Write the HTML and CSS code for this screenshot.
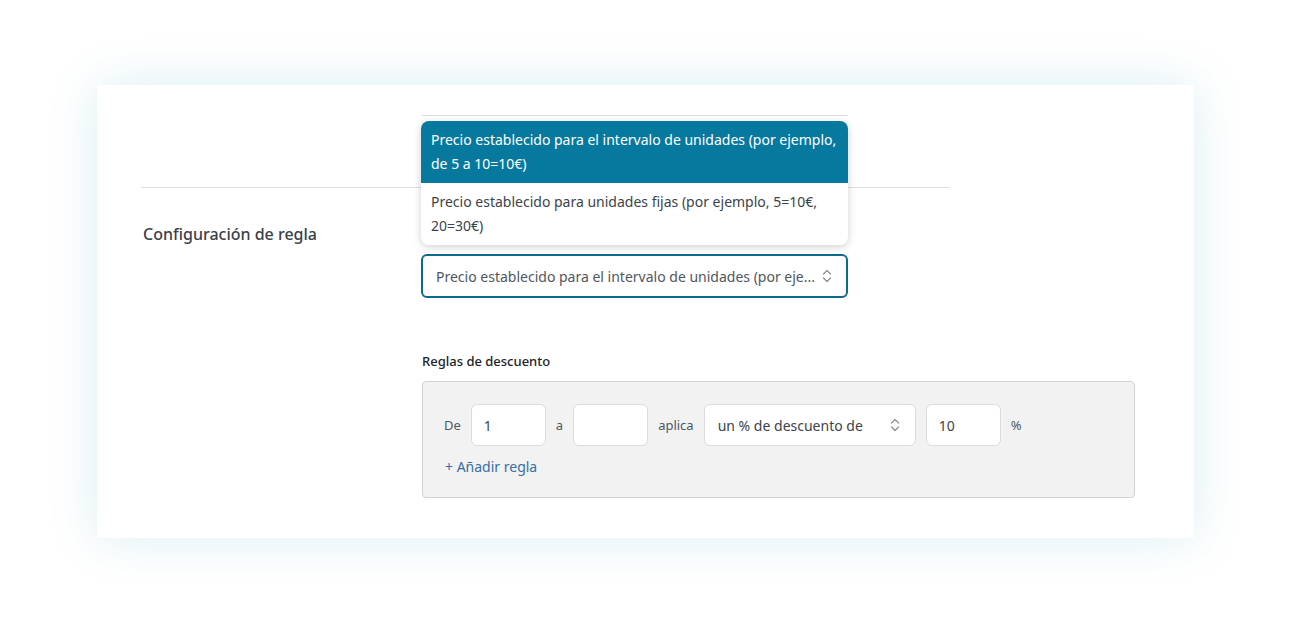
FILE: index.html
```html
<!DOCTYPE html>
<html lang="es">
<head>
<meta charset="utf-8">
<title>Configuración de regla</title>
<link rel="stylesheet" href="styles.css">
</head>
<body>
<div class="page">
<div class="card">
  <div class="row top-row">
    <div class="label-col"></div>
    <div class="field-col"><div class="prev-field"></div></div>
  </div>
  <div class="row main-row">
    <div class="label-col"><div class="section-label">Configuración de regla</div></div>
    <div class="field-col">
      <div class="select-wrap">
        <ul class="menu">
          <li class="menu-item selected">Precio establecido para el intervalo de unidades (por ejemplo, de 5 a 10=10€)</li>
          <li class="menu-item">Precio establecido para unidades fijas (por ejemplo, 5=10€, 20=30€)</li>
        </ul>
        <div class="select focused">
          <span class="select-text">Precio establecido para el intervalo de unidades (por eje...</span>
          <svg class="chev" width="10" height="14" viewBox="0 0 10 14"><path d="M1.5 5 L5 1.5 L8.5 5 M1.5 9 L5 12.5 L8.5 9" fill="none" stroke="#8c8f94" stroke-width="1.3" stroke-linecap="round" stroke-linejoin="round"/></svg>
        </div>
      </div>
      <div class="rules-title">Reglas de descuento</div>
      <div class="rules-box">
        <div class="rule-line">
          <span class="word">De</span>
          <div class="input">1</div>
          <span class="word">a</span>
          <div class="input"></div>
          <span class="word">aplica</span>
          <div class="input select-small">
            <span>un % de descuento de</span>
            <svg class="chev" width="10" height="14" viewBox="0 0 10 14"><path d="M1.5 5 L5 1.5 L8.5 5 M1.5 9 L5 12.5 L8.5 9" fill="none" stroke="#8c8f94" stroke-width="1.3" stroke-linecap="round" stroke-linejoin="round"/></svg>
          </div>
          <div class="input">10</div>
          <span class="word">%</span>
        </div>
        <a class="add-rule" href="#">+ Añadir regla</a>
      </div>
    </div>
  </div>
</div>
</div>
</body>
</html>
```
FILE: styles.css
```css
* { box-sizing: border-box; }
html, body { background: #ffffff; }
body {
  margin: 0;
  font-family: "Noto Sans", "Open Sans", sans-serif;
  color: #3c434a;
}
.page {
  min-height: 629px;
  padding: 85px 0 0 97px;
}
.card {
  width: 1097px;
  height: 453px;
  background: #ffffff;
  padding: 30px 244px 0 44px;
  box-shadow: 0 0 50px rgba(0, 140, 170, 0.15);
  border-radius: 2px;
}
.row {
  display: grid;
  grid-template-columns: 280px 1fr;
}
.top-row { height: 72px; }
.prev-field {
  width: 426px;
  margin-left: 1px;
  border-top: 1px solid #dcdcde;
}
.main-row {
  border-top: 1px solid #e0e0e3;
  width: 809px;
}
.section-label {
  padding: 34px 0 0 2px;
  font-size: 16px;
  line-height: 24px;
  font-weight: 500;
  color: #3a4148;
}
.field-col { position: relative; }
.select-wrap {
  position: relative;
  margin-top: 66px;
  width: 427px;
}
.menu {
  position: absolute;
  left: 0;
  right: 0;
  bottom: calc(100% + 9px);
  margin: 0;
  padding: 0;
  list-style: none;
  background: #ffffff;
  border-radius: 8px;
  overflow: hidden;
  box-shadow: 0 2px 8px rgba(0, 0, 0, 0.18);
  z-index: 2;
}
.menu-item {
  padding: 7px 3px 7px 10px;
  font-size: 14px;
  line-height: 24px;
  color: #3c434a;
}
.menu-item.selected {
  background: #08799e;
  color: #ffffff;
}
.select {
  height: 44px;
  border: 2px solid #0b6b8c;
  border-radius: 6px;
  display: flex;
  align-items: center;
  justify-content: space-between;
  padding: 0 14px 0 13px;
  background: #fff;
}
.select-text {
  font-size: 14px;
  color: #50575e;
  white-space: nowrap;
}
.rules-title {
  margin-top: 53px;
  margin-left: 1px;
  font-size: 13px;
  line-height: 20px;
  font-weight: 500;
  color: #1d2327;
}
.rules-box {
  margin-top: 10px;
  margin-left: 1px;
  width: 713px;
  height: 117px;
  background: #f2f2f3;
  border: 1px solid #d3d3d7;
  border-radius: 4px;
  padding: 22px 20px 0 21px;
}
.rule-line {
  display: flex;
  align-items: center;
  gap: 10px;
}
.word {
  font-size: 13px;
  color: #50575e;
}
.rule-line .word:first-child { margin-right: 0; }
.input {
  width: 75px;
  height: 42px;
  background: #ffffff;
  border: 1px solid #dcdcde;
  border-radius: 6px;
  padding: 0 12px;
  display: flex;
  align-items: center;
  font-size: 14px;
  color: #3c434a;
}
.select-small {
  width: 212px;
  justify-content: space-between;
  padding: 0 15px 0 13px;
}
.add-rule {
  display: inline-block;
  margin-top: 11px;
  margin-left: 1px;
  font-size: 14px;
  line-height: 20px;
  color: #3a6ea0;
  text-decoration: none;
}
```
